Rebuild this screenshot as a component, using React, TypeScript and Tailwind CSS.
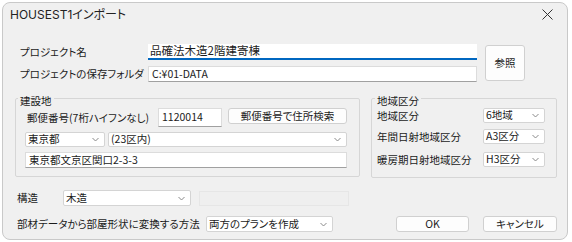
import React from 'react'

function Chevron() {
  return (
    <svg width="7" height="5" viewBox="0 0 7 5" className="shrink-0">
      <path d="M0.5 1 L3.5 4 L6.5 1" fill="none" stroke="#8a8a8a" strokeWidth="1" />
    </svg>
  )
}

function Select({ value, className }: { value: string; className: string }) {
  return (
    <div className={`shrink-0 flex items-center justify-between bg-white border border-[#d4d4d4] rounded-[2px] pl-[2px] pr-[5px] ${className}`}>
      <span className="leading-none">{value}</span>
      <Chevron />
    </div>
  )
}

function TextBox({ value, className }: { value?: string; className: string }) {
  return (
    <div className={`shrink-0 flex items-center bg-white border border-[#dcdcdc] border-b-[#a0a0a0] pl-[3px] ${className}`}>
      <span className="leading-none">{value}</span>
    </div>
  )
}

function Btn({ label, className }: { label: string; className: string }) {
  return (
    <div className={`shrink-0 flex items-center justify-center bg-[#fdfdfd] border border-[#d0d0d0] rounded-[3px] ${className}`}>
      <span className="leading-none">{label}</span>
    </div>
  )
}

export default function App() {
  return (
    <div className="w-[572px] h-[242px] bg-white p-[2px] text-[10.5px] leading-[14px] whitespace-nowrap text-[#1b1b1b] font-['Noto_Sans_CJK_JP',sans-serif] [font-feature-settings:'palt']">
      <div className="w-[566px] h-[238px] rounded-[8px] border border-[#c9c9c9] bg-[#f0f0f0] flex flex-col overflow-hidden">
        {/* title bar */}
        <div className="shrink-0 h-[23px] flex items-center justify-between pl-[7px] pr-[14px]">
          <span className="text-[12px] leading-none text-[#222] font-['Inter','Noto_Sans_CJK_JP',sans-serif]">HOUSEST1インポート</span>
          <svg width="11" height="11" viewBox="0 0 11 11">
            <path d="M0.5 0.5 L10.5 10.5 M10.5 0.5 L0.5 10.5" stroke="#333" strokeWidth="1" />
          </svg>
        </div>

        {/* project */}
        <div className="shrink-0 mt-[18px] flex items-start pl-[17px]">
          <div className="flex flex-col gap-[6px]">
            <div className="flex items-center">
              <span className="w-[128px]">プロジェクト名</span>
              <div className="w-[329px] h-[16px] flex items-center bg-white border-b-[2px] border-[#0067c0] pl-[2px]">
                <span className="leading-none text-[11.5px]">品確法木造2階建寄棟</span>
              </div>
            </div>
            <div className="flex items-center">
              <span className="w-[128px]">プロジェクトの保存フォルダ</span>
              <TextBox value="C:¥01-DATA" className="w-[329px] h-[16px]" />
            </div>
          </div>
          <Btn label="参照" className="ml-[8px] mt-[1px] w-[40px] h-[36px]" />
        </div>

        {/* groups */}
        <div className="shrink-0 mt-[7px] flex items-start pl-[12px]">
          <fieldset className="w-[345px] border border-[#d6d6d6] rounded-[2px] pl-[9px] pr-[12px] pb-[8px]">
            <legend className="-ml-[7px] px-[2px] pt-[6px] leading-[12px]">建設地</legend>
            <div className="mt-[1px] flex items-start pl-[2px]">
              <span className="w-[131px] leading-[19px]">郵便番号(7桁ハイフンなし)</span>
              <TextBox value="1120014" className="w-[64px] h-[19px]" />
              <Btn label="郵便番号で住所検索" className="ml-[6px] w-[119px] h-[16px]" />
            </div>
            <div className="mt-[5px] flex gap-[3px]">
              <Select value="東京都" className="w-[80px] h-[15px]" />
              <Select value="(23区内)" className="w-[239px] h-[15px]" />
            </div>
            <TextBox value="東京都文京区関口2-3-3" className="mt-[5px] w-[322px] h-[16px]" />
          </fieldset>

          <fieldset className="ml-[11px] w-[186px] border border-[#d6d6d6] rounded-[2px] pl-[5px] pr-[11px] pb-[10px]">
            <legend className="-ml-[2px] px-[2px] pt-[6px] leading-[12px]">地域区分</legend>
            <div className="mt-[1px] flex flex-col">
              <div className="h-[15px] flex items-center justify-between">
                <span>地域区分</span>
                <Select value="6地域" className="w-[62px] h-[15px]" />
              </div>
              <div className="mt-[6px] h-[15px] flex items-center justify-between">
                <span>年間日射地域区分</span>
                <Select value="A3区分" className="w-[62px] h-[15px]" />
              </div>
              <div className="mt-[8px] h-[15px] flex items-center justify-between">
                <span>暖房期日射地域区分</span>
                <Select value="H3区分" className="w-[62px] h-[15px]" />
              </div>
            </div>
          </fieldset>
        </div>

        {/* structure */}
        <div className="shrink-0 mt-[12px] flex items-center pl-[14px]">
          <span className="w-[46px]">構造</span>
          <Select value="木造" className="w-[128px] h-[16px]" />
          <div className="ml-[8px] w-[150px] h-[15px] border border-[#e6e6e6] bg-[#efefef]" />
        </div>

        <div className="shrink-0 mt-[10px] flex items-center pl-[14px]">
          <span className="w-[189px]">部材データから部屋形状に変換する方法</span>
          <Select value="両方のプランを作成" className="w-[127px] h-[16px]" />
          <Btn label="OK" className="ml-[63px] w-[73px] h-[16px] border-[#3d8fd6]" />
          <Btn label="キャンセル" className="ml-[14px] w-[74px] h-[16px]" />
        </div>
      </div>
    </div>
  )
}
